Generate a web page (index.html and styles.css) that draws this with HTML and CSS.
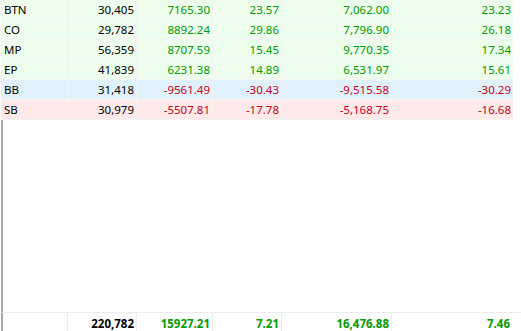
FILE: index.html
```html
<!DOCTYPE html>
<html>
<head>
<meta charset="utf-8">
<link rel="stylesheet" href="styles.css">
</head>
<body>
<div class="grid">
  <div class="rows">
    <div class="row pos"><span class="name">BTN</span><span>30,405</span><span class="g">7165.30</span><span class="g">23.57</span><span class="g">7,062.00</span><span class="g">23.23</span></div>
    <div class="row pos"><span class="name">CO</span><span>29,782</span><span class="g">8892.24</span><span class="g">29.86</span><span class="g">7,796.90</span><span class="g">26.18</span></div>
    <div class="row pos"><span class="name">MP</span><span>56,359</span><span class="g">8707.59</span><span class="g">15.45</span><span class="g">9,770.35</span><span class="g">17.34</span></div>
    <div class="row pos"><span class="name">EP</span><span>41,839</span><span class="g">6231.38</span><span class="g">14.89</span><span class="g">6,531.97</span><span class="g">15.61</span></div>
    <div class="row blue"><span class="name">BB</span><span>31,418</span><span class="r">-9561.49</span><span class="r">-30.43</span><span class="r">-9,515.58</span><span class="r">-30.29</span></div>
    <div class="row pink"><span class="name">SB</span><span>30,979</span><span class="r">-5507.81</span><span class="r">-17.78</span><span class="r">-5,168.75</span><span class="r">-16.68</span></div>
  </div>
  <div class="filler"></div>
  <div class="footer">
    <span class="name"></span><span>220,782</span><span class="g">15927.21</span><span class="g">7.21</span><span class="g">16,476.88</span><span class="g">7.46</span>
  </div>
</div>
</body>
</html>
```
FILE: styles.css
```css
html, body {
  margin: 0;
  padding: 0;
  background: #ffffff;
}
.grid {
  width: 521px;
  height: 331px;
  display: flex;
  flex-direction: column;
  font-family: "Noto Sans", "DejaVu Sans", sans-serif;
  font-size: 11.5px;
  color: #000;
  overflow: hidden;
}
.rows {
  display: flex;
  flex-direction: column;
  margin-left: 1px;
  width: 512px;
}
.row, .footer {
  display: grid;
  grid-template-columns: 67px 69px 76px 69px 110px 121px;
}
.row {
  height: 19px;
  border-bottom: 1px solid #f3f3f3;
}
.row span, .footer span {
  text-align: right;
  padding-right: 2px;
  line-height: 20px;
  border-right: 1px solid #f3f3f3;
  white-space: nowrap;
  overflow: hidden;
}
.row span:last-child { border-right: none; }
.row span.name {
  text-align: left;
  padding-left: 3px;
}
.pos { background: #edfeed; }
.blue { background: #e1f1fc; }
.pink { background: #ffe9e9; }
.g { color: #009a00; }
.r { color: #c4001c; }
.filler {
  flex: 1;
  margin-left: 1px;
  border-left: 2px solid #a8a8a8;
}
.footer {
  margin-left: 1px;
  border-left: 2px solid #a8a8a8;
  border-top: 1px solid #ececec;
  height: 18px;
  font-weight: bold;
  grid-template-columns: 65px 69px 76px 69px 110px 128px;
}
.footer span {
  line-height: 22px;
  border-right-color: #ececec;
}
.footer span:last-child { border-right: none; padding-right: 10px; }
```
